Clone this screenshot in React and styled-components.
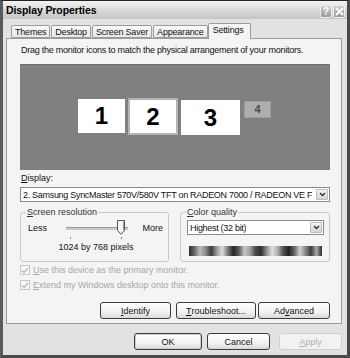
import React from 'react';
import styled, { createGlobalStyle } from 'styled-components';

const GlobalStyle = createGlobalStyle`
  html, body { margin: 0; padding: 0; background: #fff; }
  body { font-family: "Liberation Sans", Arial, sans-serif; }
`;

const stripes = [
  '#2c2c2c', '#6a6a6a', '#bdbdbd', '#8c8c8c', '#3a3a3a', '#9a9a9a', '#dedede', '#7a7a7a',
  '#262626', '#595959', '#c6c6c6', '#a0a0a0', '#4a4a4a', '#303030', '#8f8f8f', '#e0e0e0',
  '#b0b0b0', '#505050', '#222222', '#666666', '#cfcfcf', '#8a8a8a', '#3c3c3c', '#a8a8a8',
];

const stripeGradient = () => {
  const step = 100 / stripes.length;
  return stripes
    .map((c, i) => `${c} ${(i * step).toFixed(2)}%, ${stripes[(i + 1) % stripes.length]} ${((i + 1) * step).toFixed(2)}%`)
    .join(', ');
};

const monitors = [
  { n: 1, x: 58, y: 34, w: 47, h: 34 },
  { n: 2, x: 108, y: 33, w: 50, h: 37, active: true },
  { n: 3, x: 161, y: 35, w: 59, h: 35 },
  { n: 4, x: 224, y: 36, w: 27, h: 17, off: true },
];

const Arrow = () => (
  <svg width="7" height="5" viewBox="0 0 7 5">
    <path d="M1 1 L3.5 3.5 L6 1" stroke="#333" strokeWidth="1.4" fill="none" />
  </svg>
);

const Tickmark = () => (
  <svg width="8" height="7" viewBox="0 0 8 7">
    <path d="M1 3.5 L3 5.5 L7 1" stroke="#b8b8b8" strokeWidth="1.3" fill="none" />
  </svg>
);

const App = () => {
  return (
    <>
      <GlobalStyle />
      <Window>
        <TitleBar>
          <Title>Display Properties</Title>
          <Caption>
            <CapButton>?</CapButton>
            <CapButton>
              <svg width="9" height="9" viewBox="0 0 9 9">
                <path d="M1 1 L8 8 M8 1 L1 8" stroke="#fff" strokeWidth="1.8" />
              </svg>
            </CapButton>
          </Caption>
        </TitleBar>
        <Body>
          <Tabs>
            <Tab>Themes</Tab>
            <Tab>Desktop</Tab>
            <Tab>Screen Saver</Tab>
            <Tab>Appearance</Tab>
            <Tab $active>Settings</Tab>
          </Tabs>
          <Panel>
            <Hint>Drag the monitor icons to match the physical arrangement of your monitors.</Hint>
            <Canvas>
              {monitors.map(m => (
                <Monitor
                  key={m.n}
                  $active={m.active}
                  $off={m.off}
                  style={{ left: m.x, top: m.y, width: m.w, height: m.h }}
                >
                  {m.n}
                </Monitor>
              ))}
            </Canvas>
            <Label><u>D</u>isplay:</Label>
            <Select>
              <SelectText>2. Samsung SyncMaster 570V/580V TFT on RADEON 7000 / RADEON VE F</SelectText>
              <DropButton><Arrow /></DropButton>
            </Select>
            <Groups>
              <Group>
                <Legend><u>S</u>creen resolution</Legend>
                <SliderRow>
                  <span>Less</span>
                  <Slider>
                    <Track />
                    <Thumb>
                      <svg width="8" height="15" viewBox="0 0 8 15">
                        <path d="M0.5 0.5 H7.5 V10.5 L4 14.3 L0.5 10.5 Z" fill="#f4f4f4" stroke="#555" />
                        <path d="M6.5 1.5 V10.3" stroke="#999" />
                      </svg>
                    </Thumb>
                    <Tick $left={4} />
                    <Tick $left={55} />
                  </Slider>
                  <span>More</span>
                </SliderRow>
                <Resolution>1024 by 768 pixels</Resolution>
              </Group>
              <Group>
                <Legend><u>C</u>olor quality</Legend>
                <QualitySelect>
                  <SelectText>Highest (32 bit)</SelectText>
                  <DropButton><Arrow /></DropButton>
                </QualitySelect>
                <ColorBar $gradient={stripeGradient()} />
              </Group>
            </Groups>
            <Check $first>
              <Box><Tickmark /></Box>
              <span><u>U</u>se this device as the primary monitor.</span>
            </Check>
            <Check>
              <Box><Tickmark /></Box>
              <span><u>E</u>xtend my Windows desktop onto this monitor.</span>
            </Check>
            <PanelButtons>
              <Button $w={71}><u>I</u>dentify</Button>
              <Button $w={80}><u>T</u>roubleshoot...</Button>
              <Button $w={72} $gap={2}>Ad<u>v</u>anced</Button>
            </PanelButtons>
          </Panel>
          <DialogButtons>
            <Button $w={68} $default>OK</Button>
            <Button $w={63}>Cancel</Button>
            <Button $w={63} $gap={9} $disabled><u>A</u>pply</Button>
          </DialogButtons>
        </Body>
      </Window>
    </>
  );
};

const Window = styled.div`
  width: 350px;
  height: 358px;
  box-sizing: border-box;
  display: flex;
  flex-direction: column;
  background: #e2e2e2;
  border-top: 1px solid #222;
  border-left: 3px solid #5a5a5a;
  border-right: 3px solid #4a4a4a;
  border-bottom: 3px solid #4a4a4a;
  font-size: 9px;
  color: #111;
`;

const TitleBar = styled.div`
  height: 18px;
  display: flex;
  align-items: center;
  justify-content: space-between;
  padding: 0 2px 0 3px;
  background: linear-gradient(to bottom, #f4f4f4 0%, #dadada 45%, #c6c6c6 100%);
`;

const Title = styled.div`
  font-weight: bold;
  font-size: 10.5px;
  letter-spacing: -0.1px;
  color: #000;
`;

const Caption = styled.div`
  display: flex;
  gap: 1px;
  margin-top: 2px;
`;

const CapButton = styled.div`
  width: 12px;
  height: 13px;
  box-sizing: border-box;
  border: 1px solid #eee;
  border-radius: 2px;
  background: linear-gradient(to bottom, #cfcfcf, #9a9a9a);
  color: #fff;
  font-weight: bold;
  font-size: 10px;
  display: flex;
  align-items: center;
  justify-content: center;
`;

const Body = styled.div`
  flex: 1;
  display: flex;
  flex-direction: column;
  padding: 4px 5px 0 3px;
`;

const Tabs = styled.div`
  display: flex;
  align-items: flex-end;
  padding-left: 5px;
  height: 15px;
  position: relative;
  z-index: 1;
`;

const Tab = styled.div`
  height: ${p => (p.$active ? 16 : 13)}px;
  box-sizing: border-box;
  padding: ${p => (p.$active ? '1px 6px 0 4px' : '1px 3px 0')};
  margin-left: ${p => (p.$active ? 0 : 1)}px;
  margin-bottom: ${p => (p.$active ? -1 : 0)}px;
  border: 1px solid #9c9c9c;
  border-bottom: ${p => (p.$active ? 'none' : '1px solid #9c9c9c')};
  border-radius: 2px 2px 0 0;
  background: ${p => (p.$active ? '#f4f4f4' : 'linear-gradient(to bottom, #fafafa, #e8e8e8)')};
  font-size: 9px;
  letter-spacing: -0.2px;
  line-height: 10px;
  white-space: nowrap;
  &:first-child { margin-left: 0; }
`;

const Panel = styled.div`
  height: 286px;
  box-sizing: border-box;
  border: 1px solid #9c9c9c;
  background: #f4f4f4;
  padding: 6px 11px 0 13px;
  display: flex;
  flex-direction: column;
`;

const Hint = styled.div`
  font-size: 9px;
  line-height: 11px;
  letter-spacing: -0.25px;
  margin-left: 1px;
`;

const Canvas = styled.div`
  position: relative;
  margin-top: 8px;
  height: 106px;
  box-sizing: border-box;
  background: #808080;
  border-top: 1px solid #6c6c6c;
`;

const Monitor = styled.div`
  position: absolute;
  box-sizing: border-box;
  display: flex;
  justify-content: center;
  font-weight: bold;
  font-size: ${p => (p.$off ? 11 : 24)}px;
  color: ${p => (p.$off ? '#4a4a4a' : '#000')};
  background: ${p => (p.$off ? '#aeaeae' : '#fff')};
  border: ${p => (p.$active ? '2px solid #b4b4b4' : p.$off ? '1px dotted #8a8a8a' : 'none')};
  align-items: ${p => (p.$off ? 'flex-start' : 'center')};
  padding-top: ${p => (p.$off ? 1 : 0)}px;
`;

const Label = styled.div`
  margin-top: 2px;
  font-size: 9px;
  line-height: 13px;
  margin-left: 1px;
`;

const Select = styled.div`
  margin-top: 2px;
  height: 15px;
  box-sizing: border-box;
  border: 1px solid #8a8a8a;
  background: #fff;
  display: flex;
  align-items: center;
  justify-content: space-between;
  gap: 2px;
  padding: 0 1px 0 2px;
`;

const SelectText = styled.div`
  font-size: 9px;
  letter-spacing: -0.3px;
  white-space: nowrap;
  overflow: hidden;
`;

const DropButton = styled.div`
  flex: none;
  width: 12px;
  height: 11px;
  box-sizing: border-box;
  border: 1px solid #bbb;
  border-radius: 1px;
  background: linear-gradient(to bottom, #f4f4f4, #d4d4d4);
  display: flex;
  align-items: center;
  justify-content: center;
`;

const Groups = styled.div`
  display: flex;
  gap: 11px;
  margin-top: 10px;
`;

const Group = styled.div`
  position: relative;
  flex: 1;
  height: 50px;
  box-sizing: border-box;
  border: 1px solid #c8c8c8;
  border-radius: 3px;
  padding: 7px 5px 0 6px;
`;

const Legend = styled.div`
  position: absolute;
  top: -6px;
  left: 5px;
  padding: 0 1px;
  background: #f4f4f4;
  font-size: 9px;
  line-height: 11px;
  color: #333;
`;

const SliderRow = styled.div`
  display: flex;
  align-items: flex-start;
  justify-content: space-between;
  padding: 3px 0 0 1px;
  font-size: 9px;
  line-height: 10px;
`;

const Slider = styled.div`
  position: relative;
  width: 62px;
  height: 17px;
  margin-left: 4px;
`;

const Track = styled.div`
  position: absolute;
  left: 0;
  right: 0;
  top: 4px;
  height: 2px;
  background: #c8c8c8;
  border-top: 1px solid #9a9a9a;
`;

const Thumb = styled.div`
  position: absolute;
  left: 51px;
  top: -3px;
  line-height: 0;
`;

const Tick = styled.div`
  position: absolute;
  left: ${p => p.$left}px;
  top: 14px;
  width: 1px;
  height: 2px;
  background: #888;
`;

const Resolution = styled.div`
  text-align: center;
  font-size: 9px;
  margin-top: 2px;
  padding-left: 2px;
`;

const QualitySelect = styled(Select)`
  margin-top: 0;
  width: 137px;
`;

const ColorBar = styled.div`
  margin: 11px 0 0 2px;
  width: 133px;
  height: 10px;
  background: linear-gradient(to right, ${p => p.$gradient});
`;

const Check = styled.div`
  display: flex;
  align-items: center;
  gap: 3px;
  margin-top: ${p => (p.$first ? 3 : 5)}px;
  font-size: 9px;
  color: #a6a6a6;
  height: 10px;
`;

const Box = styled.div`
  width: 10px;
  height: 10px;
  box-sizing: border-box;
  border: 1px solid #c6c6c6;
  background: #f8f8f8;
  display: flex;
  align-items: center;
  justify-content: center;
`;

const PanelButtons = styled.div`
  display: flex;
  justify-content: flex-end;
  gap: 5px;
  margin-top: 12px;
`;

const Button = styled.div`
  width: ${p => p.$w}px;
  height: 17px;
  box-sizing: border-box;
  margin-left: ${p => (p.$gap ? p.$gap - 5 : 0)}px;
  border: 1px solid ${p => (p.$disabled ? '#cfcfcf' : '#3c3c3c')};
  border-radius: 3px;
  background: ${p => (p.$disabled ? '#f2f2f2' : 'linear-gradient(to bottom, #ffffff 0%, #f2f2f2 60%, #d9d9d9 100%)')};
  box-shadow: ${p => (p.$default ? 'inset 0 0 0 1px #cfcfcf' : 'none')};
  color: ${p => (p.$disabled ? '#b2b2b2' : '#111')};
  font-size: 9px;
  display: flex;
  align-items: center;
  justify-content: center;
`;

const DialogButtons = styled.div`
  display: flex;
  justify-content: flex-end;
  gap: 5px;
  margin-top: 9px;
`;

export default App;
